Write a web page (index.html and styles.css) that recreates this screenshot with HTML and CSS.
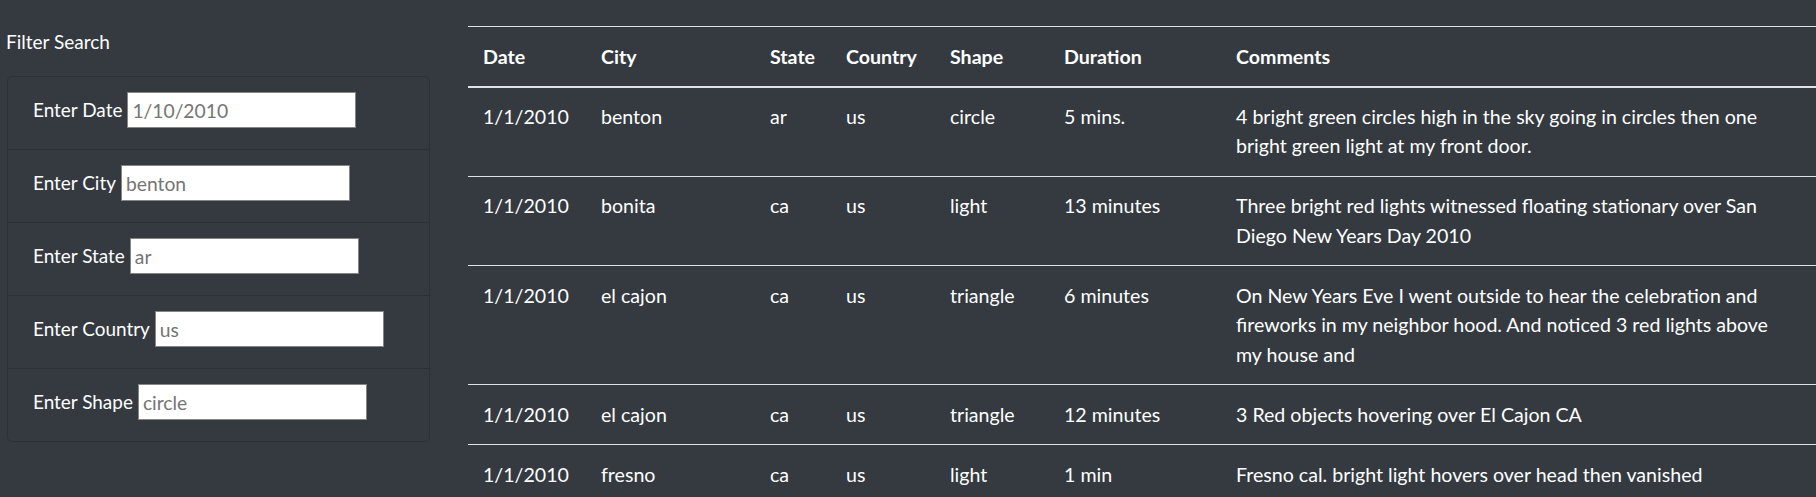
FILE: index.html
```html
<!DOCTYPE html>
<html lang="en">
<head>
<meta charset="utf-8">
<title>UFO Sightings</title>
<link rel="stylesheet" href="styles.css">
</head>
<body>
<div class="page">
  <aside class="filters">
    <div class="filters-title">Filter Search</div>
    <ul class="filter-list">
      <li class="filter-item"><label for="datetime">Enter Date</label><input id="datetime" type="text" placeholder="1/10/2010"></li>
      <li class="filter-item"><label for="city">Enter City</label><input id="city" type="text" placeholder="benton"></li>
      <li class="filter-item"><label for="state">Enter State</label><input id="state" type="text" placeholder="ar"></li>
      <li class="filter-item"><label for="country">Enter Country</label><input id="country" type="text" placeholder="us"></li>
      <li class="filter-item"><label for="shape">Enter Shape</label><input id="shape" type="text" placeholder="circle"></li>
    </ul>
  </aside>
  <main class="results">
    <table class="ufo-table">
      <colgroup>
        <col class="c-date"><col class="c-city"><col class="c-state"><col class="c-country"><col class="c-shape"><col class="c-duration"><col class="c-comments">
      </colgroup>
      <thead>
        <tr><th>Date</th><th>City</th><th>State</th><th>Country</th><th>Shape</th><th>Duration</th><th>Comments</th></tr>
      </thead>
      <tbody>
        <tr><td>1/1/2010</td><td>benton</td><td>ar</td><td>us</td><td>circle</td><td>5 mins.</td><td>4 bright green circles high in the sky going in circles then one<br>bright green light at my front door.</td></tr>
        <tr><td>1/1/2010</td><td>bonita</td><td>ca</td><td>us</td><td>light</td><td>13 minutes</td><td>Three bright red lights witnessed floating stationary over San<br>Diego New Years Day 2010</td></tr>
        <tr><td>1/1/2010</td><td>el cajon</td><td>ca</td><td>us</td><td>triangle</td><td>6 minutes</td><td>On New Years Eve I went outside to hear the celebration and<br>fireworks in my neighbor hood. And noticed 3 red lights above<br>my house and</td></tr>
        <tr><td>1/1/2010</td><td>el cajon</td><td>ca</td><td>us</td><td>triangle</td><td>12 minutes</td><td>3 Red objects hovering over El Cajon CA</td></tr>
        <tr><td>1/1/2010</td><td>fresno</td><td>ca</td><td>us</td><td>light</td><td>1 min</td><td>Fresno cal. bright light hovers over head then vanished</td></tr>
      </tbody>
    </table>
  </main>
</div>
</body>
</html>
```

FILE: styles.css
```css
html, body {
  margin: 0;
  padding: 0;
  background: #343a40;
  color: #ffffff;
  font-family: Lato, "Noto Sans", "Liberation Sans", sans-serif;
  font-size: 19.6px;
  line-height: 29.5px;
  overflow: hidden;
}

.page {
  display: flex;
  align-items: flex-start;
}

.filters {
  width: 423px;
  padding: 27px 0 0 7px;
  flex: none;
}

.filters-title {
  margin-left: -1px;
  height: 30px;
  margin-bottom: 19px;
  font-size: 19px;
}

.filter-list {
  list-style: none;
  margin: 0;
  padding: 0;
  border: 1px solid rgba(0, 0, 0, 0.14);
  border-radius: 5px;
}

.filter-item {
  display: flex;
  align-items: center;
  gap: 5px;
  padding: 14px 25px 20px;
  height: 38px;
  border-bottom: 1px solid rgba(0, 0, 0, 0.14);
}

.filter-item:last-child {
  border-bottom: none;
}

.filter-item label {
  font-size: 18.95px;
}

.filter-item input {
  box-sizing: border-box;
  width: 229px;
  height: 36px;
  margin: 0;
  padding: 1px 4px;
  border: 1px solid #858585;
  border-radius: 0;
  background: #ffffff;
  font-family: inherit;
  font-size: 19.3px;
  color: #495057;
}

.filter-item input::placeholder {
  color: #757575;
}

.results {
  flex: 1;
  margin-left: 38px;
  padding-top: 26px;
}

.ufo-table {
  width: 1348px;
  table-layout: fixed;
  border-collapse: separate;
  border-spacing: 0;
  color: #ffffff;
}

.c-date { width: 118px; }
.c-city { width: 169px; }
.c-state { width: 76px; }
.c-country { width: 104px; }
.c-shape { width: 114px; }
.c-duration { width: 172px; }
.c-comments { width: 595px; }

.ufo-table th,
.ufo-table td {
  text-align: left;
  vertical-align: top;
  padding: 14.75px 15px;
  border-top: 1px solid #dee2e6;
  white-space: nowrap;
}

.ufo-table th {
  font-weight: 700;
  border-bottom: 2px solid #dee2e6;
}

.ufo-table tbody tr:first-child td {
  border-top: none;
  padding-top: 13.75px;
}
```
